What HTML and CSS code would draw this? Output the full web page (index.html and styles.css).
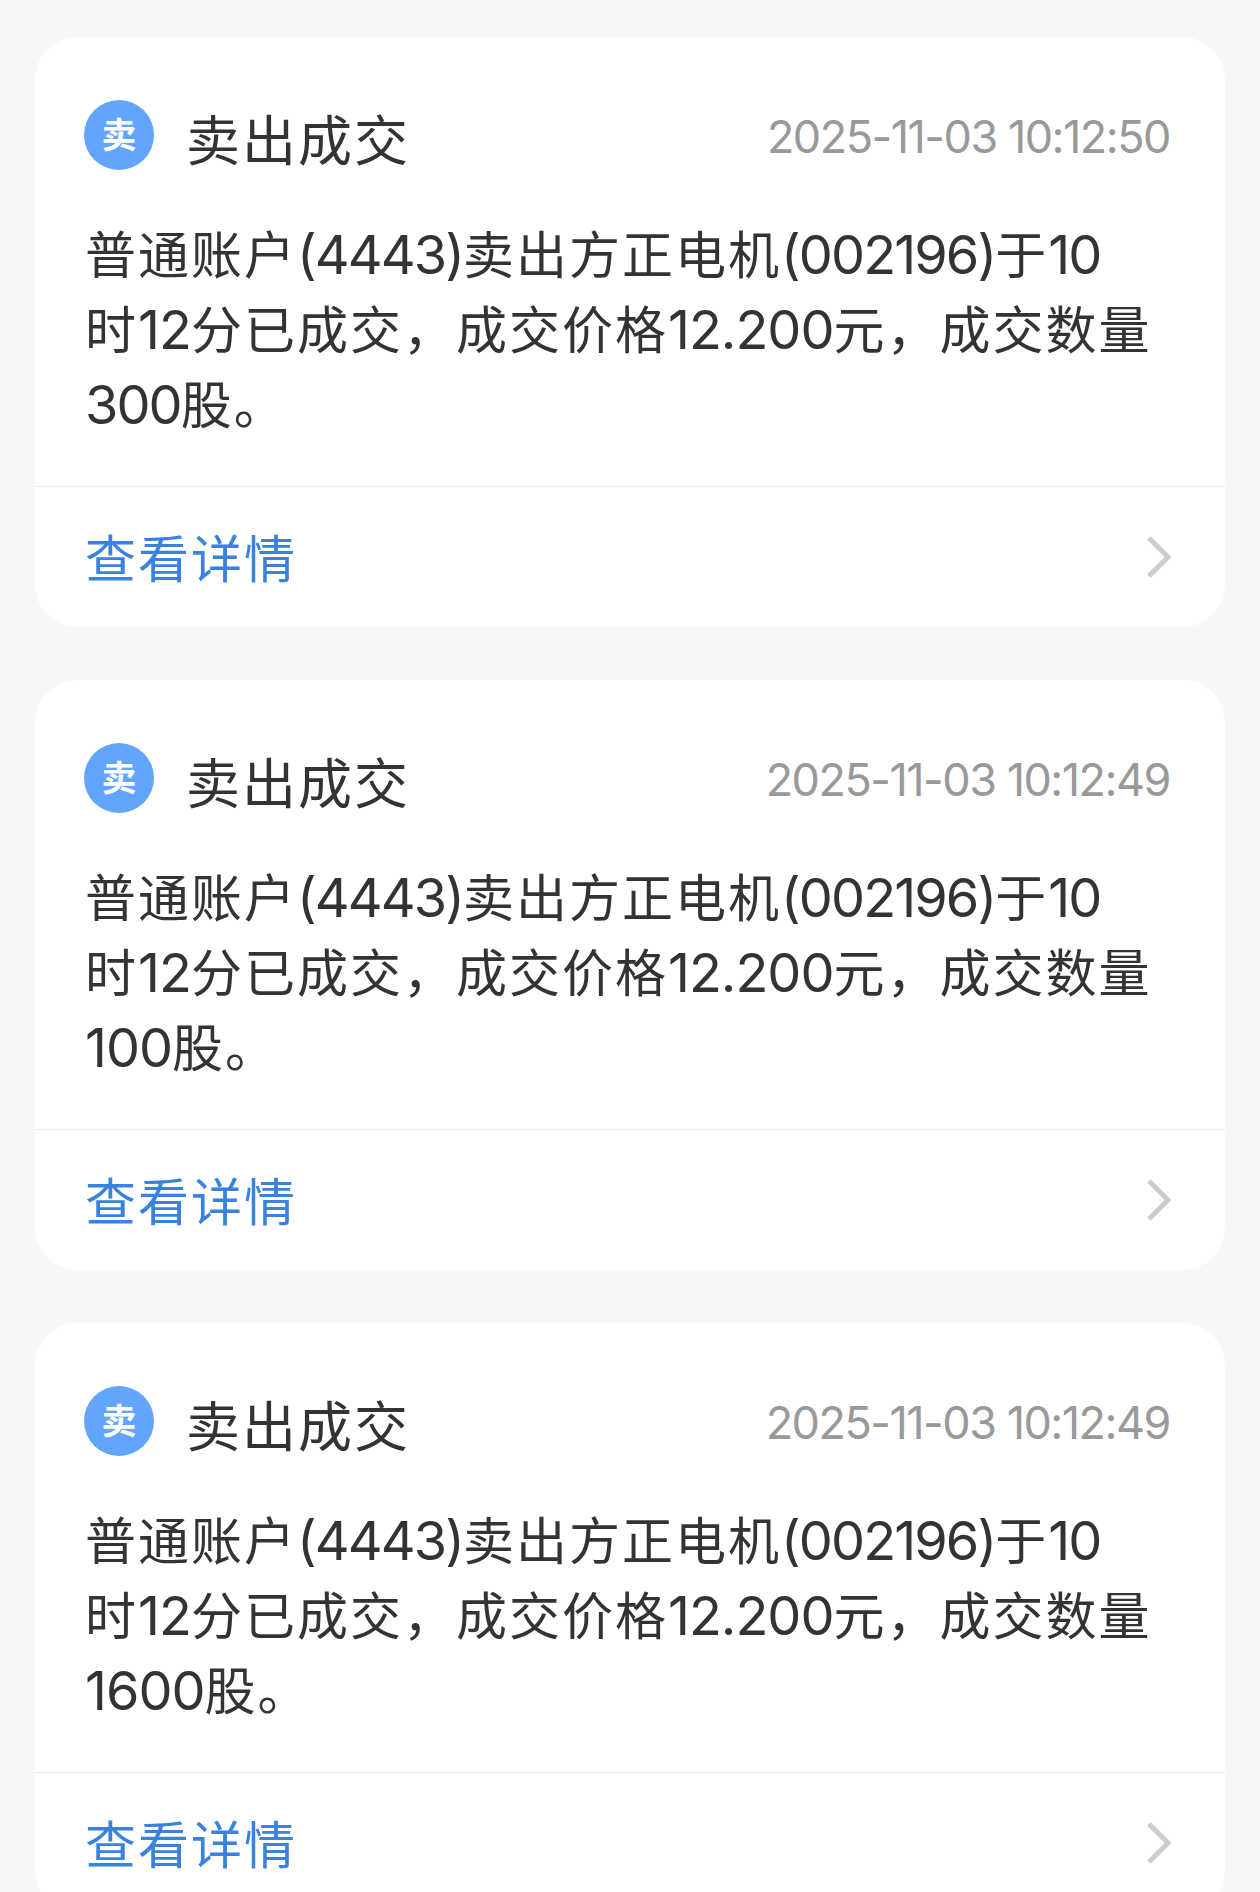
FILE: index.html
```
<!DOCTYPE html>
<html lang="zh-CN">
<head>
  <meta charset="UTF-8">
  <title>成交消息</title>
  <meta name="viewport" content="width=device-width, initial-scale=1">
  <link rel="stylesheet" href="styles.css">
</head>
<body>
  <div class="list">
    <div class="card">
      <div class="card-header">
        <span class="badge">卖</span>
        <span class="title">卖出成交</span>
        <span class="time">2025-11-03 10:12:50</span>
      </div>
      <p class="message">普通账户<span class="num">(4443)</span>卖出方正电机<span class="num">(002196)</span>于<span class="num">10</span><br>时<span class="num price">12</span>分已成交，成交价格<span class="num price">12.200</span>元，成交数量<br><span class="num">300</span>股。</p>
      <a class="detail" href="#">
        <span>查看详情</span>
        <svg class="arrow" viewBox="0 0 25 42"><path d="M2 2 21 21 2 40"/></svg>
      </a>
    </div>

    <div class="card">
      <div class="card-header">
        <span class="badge">卖</span>
        <span class="title">卖出成交</span>
        <span class="time">2025-11-03 10:12:49</span>
      </div>
      <p class="message">普通账户<span class="num">(4443)</span>卖出方正电机<span class="num">(002196)</span>于<span class="num">10</span><br>时<span class="num price">12</span>分已成交，成交价格<span class="num price">12.200</span>元，成交数量<br><span class="num price">100</span>股。</p>
      <a class="detail" href="#">
        <span>查看详情</span>
        <svg class="arrow" viewBox="0 0 25 42"><path d="M2 2 21 21 2 40"/></svg>
      </a>
    </div>

    <div class="card">
      <div class="card-header">
        <span class="badge">卖</span>
        <span class="title">卖出成交</span>
        <span class="time">2025-11-03 10:12:49</span>
      </div>
      <p class="message">普通账户<span class="num">(4443)</span>卖出方正电机<span class="num">(002196)</span>于<span class="num">10</span><br>时<span class="num price">12</span>分已成交，成交价格<span class="num price">12.200</span>元，成交数量<br><span class="num price">1600</span>股。</p>
      <a class="detail" href="#">
        <span>查看详情</span>
        <svg class="arrow" viewBox="0 0 25 42"><path d="M2 2 21 21 2 40"/></svg>
      </a>
    </div>
  </div>
</body>
</html>
```
FILE: styles.css
```
* {
  box-sizing: border-box;
  margin: 0;
  padding: 0;
}

html {
  height: 100%;
  overflow: hidden;
}

body {
  height: 100%;
  overflow: hidden;
  font-family: Inter, "Noto Sans CJK SC", sans-serif;
  background-color: #f7f8fa;
  color: #333;
}

.list {
  display: flex;
  flex-direction: column;
  gap: 53px;
  padding: 37px 35px;
}

.card {
  flex: none;
  height: 590px;
  background-color: #fff;
  border-radius: 42px;
}

.card-header {
  display: flex;
  align-items: center;
  height: 130px;
  padding: 66px 55px 0 49px;
}

.badge {
  flex: none;
  width: 70px;
  height: 70px;
  border-radius: 50%;
  background-color: #61a5ff;
  color: #fff;
  font-size: 35px;
  font-weight: 700;
  line-height: 70px;
  text-align: center;
}

.title {
  margin: 13px 0 0 32px;
  font-size: 54px;
  line-height: 64px;
  letter-spacing: 2px;
  white-space: nowrap;
}

.time {
  margin: 4px 0 0 auto;
  color: #999;
  font-size: 45px;
  line-height: 64px;
  letter-spacing: -1.5px;
  white-space: nowrap;
}

.message {
  height: 319px;
  padding: 51px 0 0 50px;
  font-size: 51px;
  line-height: 75px;
  letter-spacing: 2px;
  white-space: nowrap;
}

.num {
  font-size: 54px;
  line-height: 1;
  letter-spacing: -1.9px;
}

.num.price {
  letter-spacing: -1px;
}

.detail {
  display: flex;
  align-items: center;
  justify-content: space-between;
  height: 141px;
  padding: 0 53px 0 50px;
  border-top: 1px solid #ebedf0;
  color: #3a82e0;
  font-size: 51px;
  line-height: 70px;
  letter-spacing: 2px;
  text-decoration: none;
}

.detail span {
  padding-top: 5px;
}

.arrow {
  width: 25px;
  height: 42px;
  fill: none;
  stroke: #ccc;
  stroke-width: 5;
}
```
